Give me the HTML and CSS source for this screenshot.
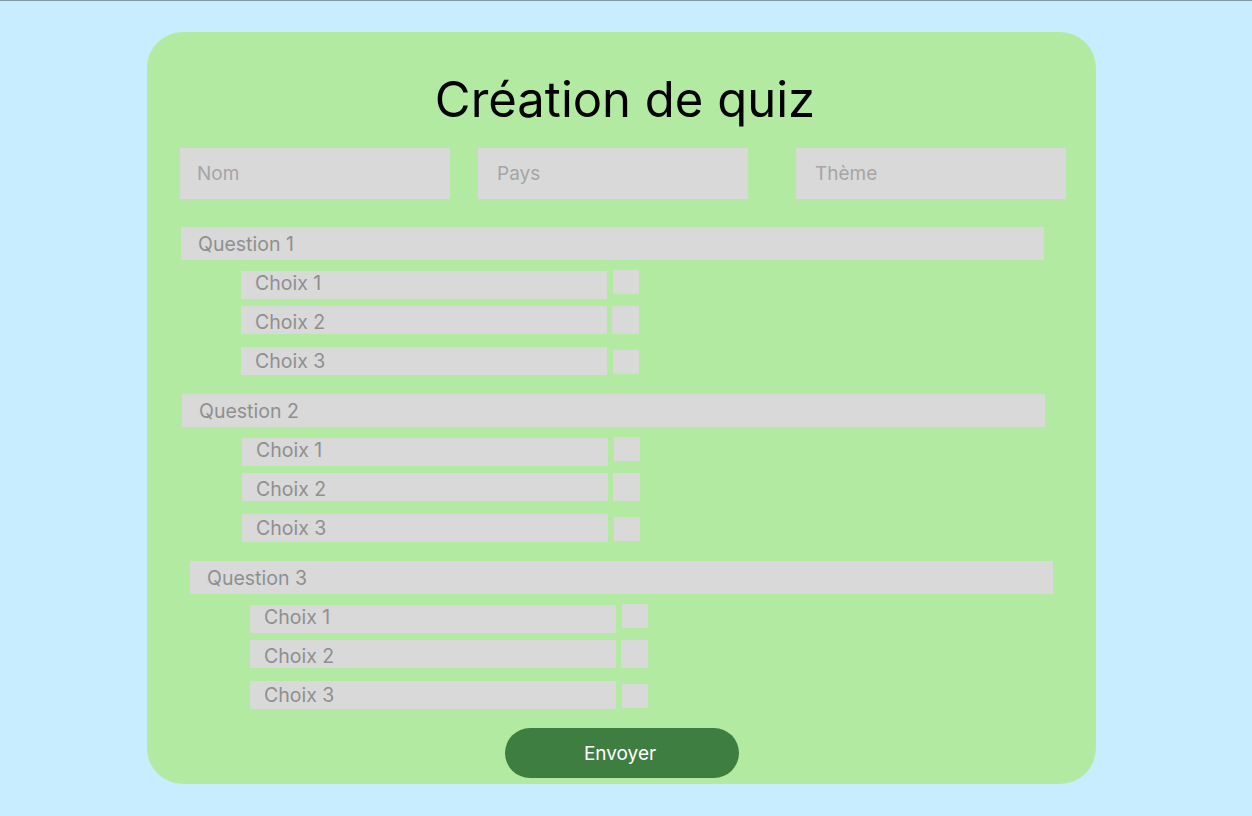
FILE: index.html
```html
<!DOCTYPE html>
<html lang="fr">
<head>
<meta charset="utf-8">
<title>Création de quiz</title>
<link rel="stylesheet" href="styles.css">
</head>
<body>
<main class="card">
  <h1 class="title">Création de quiz</h1>
  <div class="meta-row">
    <div class="field field-nom">Nom</div>
    <div class="field field-pays">Pays</div>
    <div class="field field-theme">Thème</div>
  </div>

  <section class="question q1">
    <div class="q-label">Question 1</div>
    <div class="choices">
      <div class="choice c1"><div class="choice-text">Choix 1</div><div class="check ck1"></div></div>
      <div class="choice c2"><div class="choice-text">Choix 2</div><div class="check ck2"></div></div>
      <div class="choice c3"><div class="choice-text">Choix 3</div><div class="check ck3"></div></div>
    </div>
  </section>

  <section class="question q2">
    <div class="q-label">Question 2</div>
    <div class="choices">
      <div class="choice c1"><div class="choice-text">Choix 1</div><div class="check ck1"></div></div>
      <div class="choice c2"><div class="choice-text">Choix 2</div><div class="check ck2"></div></div>
      <div class="choice c3"><div class="choice-text">Choix 3</div><div class="check ck3"></div></div>
    </div>
  </section>

  <section class="question q3">
    <div class="q-label">Question 3</div>
    <div class="choices">
      <div class="choice c1"><div class="choice-text">Choix 1</div><div class="check ck1"></div></div>
      <div class="choice c2"><div class="choice-text">Choix 2</div><div class="check ck2"></div></div>
      <div class="choice c3"><div class="choice-text">Choix 3</div><div class="check ck3"></div></div>
    </div>
  </section>

  <div class="actions">
    <button class="submit" type="button">Envoyer</button>
  </div>
</main>
</body>
</html>
```

FILE: styles.css
```css
html, body {
  margin: 0;
  padding: 0;
}
body {
  background: #c7edfe;
  border-top: 1px solid #7f98a6;
  height: 815px;
  font-family: Inter, "Noto Sans", sans-serif;
  overflow: hidden;
}
.card {
  box-sizing: border-box;
  width: 949px;
  height: 752px;
  margin: 31px 0 0 147px;
  padding: 39px 0 0 0;
  background: #b2eaa2;
  border-radius: 36px;
}
.title {
  margin: 0;
  padding-left: 7px;
  font-size: 49px;
  font-weight: 400;
  line-height: 58px;
  text-align: center;
  color: #000;
}
.meta-row {
  display: flex;
  margin: 19px 0 0 33px;
}
.field {
  box-sizing: border-box;
  width: 270px;
  height: 51px;
  background: #d9d9d9;
  color: #a5a5a5;
  font-size: 19px;
  display: flex;
  align-items: center;
  padding-left: 17px;
}
.field-pays { margin-left: 28px; padding-left: 19px; }
.field-theme { margin-left: 48px; padding-left: 19px; }

.question {
  display: flex;
  flex-direction: column;
}
.q1 { margin: 28px 0 0 34px; }
.q2 { margin: 19px 0 0 35px; }
.q3 { margin: 19px 0 0 43px; }

.q-label {
  box-sizing: border-box;
  width: 863px;
  height: 33px;
  background: #d9d9d9;
  color: #8f8f8f;
  font-size: 19.5px;
  display: flex;
  align-items: center;
  padding-left: 17px;
}
.choices {
  display: flex;
  flex-direction: column;
  margin-left: 60px;
}
.choice {
  display: flex;
  align-items: flex-start;
}
.c1 { margin-top: 11px; }
.c2 { margin-top: 7px; }
.c3 { margin-top: 13px; }
.choice-text {
  box-sizing: border-box;
  width: 366px;
  height: 28px;
  background: #d9d9d9;
  color: #8f8f8f;
  font-size: 19.5px;
  display: flex;
  align-items: center;
  padding: 0 0 0 14px;
}
.c1 .choice-text { padding-bottom: 5px; }
.c2 .choice-text { padding-top: 4px; }
.check {
  width: 26px;
  height: 24px;
  background: #d9d9d9;
  margin-left: 6px;
}
.ck1 { margin-top: -1px; }
.ck2 { height: 28px; margin-left: 5px; width: 27px; }
.ck3 { margin-top: 3px; }

.actions {
  display: flex;
  justify-content: center;
  margin-top: 19px;
}
.submit {
  width: 234px;
  height: 50px;
  border: none;
  border-radius: 25px;
  background: #3e7e41;
  color: #fff;
  font-family: Inter, "Noto Sans", sans-serif;
  font-size: 19px;
  padding: 0 3px 0 0;
}
```
